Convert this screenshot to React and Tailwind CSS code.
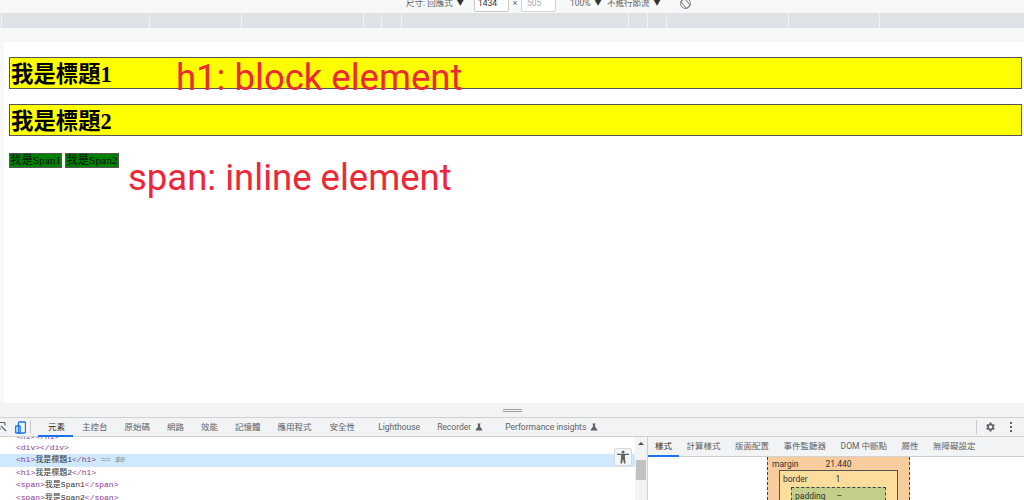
const sans = 'font-["Roboto","Noto_Sans_CJK_TC",sans-serif]';

function Flask() {
  return (
    <svg width="8" height="8" viewBox="0 0 8 8" className="shrink-0 text-[#5f6368]" fill="currentColor">
      <path d="M2.5 0.5h3v1h-.5v2l2.3 3.2v.8H.7v-.8L3 3.500v-2h-.5z" />
    </svg>
  );
}

function Caret() {
  return <span className="ml-[4px] text-[7px] text-[#333]">▼</span>;
}

const rulerSegments = [
  "w-[2px]", "w-[148px]", "w-[92px]", "w-[122px]", "w-[18px]", "w-[20px]",
  "w-[227px]", "w-[19px]", "w-[19px]", "w-[122px]", "w-[91px]", "flex-1",
];

function TopBar() {
  return (
    <div className={`${sans} h-[13px] shrink-0 overflow-hidden bg-[#f7f8f8] flex items-end pl-[406px] text-[8.500px] text-[#5f6368]`}>
      <div className="flex items-center h-[18px] mb-[1px]">
        <span className="w-[68px] flex items-center">尺寸: 回應式<Caret /></span>
        <span className="w-[35px] h-[18px] border border-[#c8c8c8] rounded-[2px] bg-white pl-[3px] leading-[16px] text-[#333]">1434</span>
        <span className="w-[12px] text-center">×</span>
        <span className="w-[35px] h-[18px] border border-[#d4d4d4] rounded-[2px] bg-white pl-[5px] leading-[16px] text-[#aaa]">505</span>
        <span className="ml-[14px] w-[37px] flex items-center">100%<Caret /></span>
        <span className="w-[73px] flex items-center">不進行節流<Caret /></span>
        <svg width="11" height="11" viewBox="0 0 11 11" fill="none" stroke="#80868b" strokeWidth="1">
          <rect x="3" y="1" width="5" height="9" rx="1" transform="rotate(-40 5.500 5.500)" />
          <circle cx="5.500" cy="5.500" r="5" />
        </svg>
      </div>
    </div>
  );
}

function Ruler() {
  return (
    <div className="h-[15px] shrink-0 border-t border-[#e0e1e3] flex bg-[#dee1e6]">
      {rulerSegments.map((w, i) => (
        <div key={i} className={`${w} border-r border-[#f2f3f5] last:border-r-0`} />
      ))}
    </div>
  );
}

function Page() {
  const h1 = 'h-[32px] ml-[1px] mr-[2px] border border-[#555] bg-[#ffff00] pl-[1px] text-[22.4px] font-bold leading-[33px] text-black font-["Liberation_Serif","Noto_Sans_CJK_TC",serif]';
  const span = 'inline-block h-[15px] border border-[#555] bg-[#008000] text-[11.4px] leading-[13px] text-[#111] font-["Liberation_Serif","Noto_Sans_CJK_TC",serif]';
  const note = 'absolute text-[#ee2737] font-["Roboto",sans-serif] font-normal leading-none whitespace-nowrap';
  return (
    <div className="h-[361px] shrink-0 ml-[4px] bg-white relative pt-[15px] pl-[4px]">
      <div className={h1}>我是標題1</div>
      <div className={`${h1} mt-[15px]`}>我是標題2</div>
      <div className="mt-[17px] ml-[1px] flex gap-[3px]">
        <span className={span}>我是Span1</span>
        <span className={span}>我是Span2</span>
      </div>
      <div className={`${note} left-[172px] top-[18px] text-[36.500px]`}>h1: block element</div>
      <div className={`${note} left-[124px] top-[118px] text-[36.500px]`}>span: inline element</div>
    </div>
  );
}

function DevToolbar() {
  const tabs = [
    ["元素", "ml-[17px] text-[#333]"], ["主控台", "ml-[17px]"], ["原始碼", "ml-[17px]"], ["網路", "ml-[17px]"],
    ["效能", "ml-[17px]"], ["記憶體", "ml-[17px]"], ["應用程式", "ml-[17px]"], ["安全性", "ml-[18px]"],
    ["Lighthouse", "ml-[23px]"],
  ];
  return (
    <div className={`${sans} h-[20px] shrink-0 border-y border-[#d0d1d3] bg-[#f1f3f4] flex items-center text-[8.500px] text-[#5f6368] relative`}>
      <svg width="7" height="12" viewBox="0 0 7 12" fill="none" stroke="#5f6368" strokeWidth="1.200" className="shrink-0">
        <path d="M-3 1.500h8M5 1.500v3M-1 8h2M1 5l5 5" />
      </svg>
      <svg width="11" height="13" viewBox="0 0 11 13" fill="none" stroke="#1a73e8" strokeWidth="1.300" className="ml-[8px] shrink-0">
        <rect x="3.500" y="1" width="7" height="11" rx="1" />
        <rect x="0.700" y="5" width="4.500" height="7" rx="0.500" />
      </svg>
      <div className="ml-[4px] w-px h-[14px] bg-[#c8c9cb]" />
      {tabs.map(([t, c]) => (
        <span key={t} className={`${c} whitespace-nowrap`}>{t}</span>
      ))}
      <span className="ml-[17px] whitespace-nowrap">Recorder</span>
      <span className="ml-[4px]"><Flask /></span>
      <span className="ml-[22px] whitespace-nowrap">Performance insights</span>
      <span className="ml-[4px]"><Flask /></span>
      <div className="absolute left-[38px] bottom-[-1px] w-[35px] h-[2px] bg-[#1a73e8]" />
      <div className="ml-auto w-px h-[14px] bg-[#c8c9cb]" />
      <svg width="12" height="12" viewBox="0 0 24 24" fill="#5f6368" className="ml-[7px] shrink-0">
        <path d="M19.400 13a7.500 7.500 0 0 0 0-2l2.100-1.600-2-3.500-2.500 1a7.500 7.500 0 0 0-1.700-1L15 3h-4l-.4 2.900a7.500 7.500 0 0 0-1.700 1l-2.500-1-2 3.500L6.500 11a7.500 7.500 0 0 0 0 2l-2.100 1.600 2 3.500 2.500-1a7.500 7.500 0 0 0 1.700 1L11 21h4l.4-2.900a7.500 7.500 0 0 0 1.700-1l2.500 1 2-3.500zM13 15.500a3.500 3.500 0 1 1 0-7 3.500 3.500 0 0 1 0 7z" />
      </svg>
      <div className="ml-[14px] mr-[12px] flex flex-col gap-[2px]">
        <i className="block w-[2px] h-[2px] bg-[#5f6368]" />
        <i className="block w-[2px] h-[2px] bg-[#5f6368]" />
        <i className="block w-[2px] h-[2px] bg-[#5f6368]" />
      </div>
    </div>
  );
}

function Tag({ name, children, suffix }) {
  const b = "text-[#8a3a90]";
  return (
    <>
      <span className={b}>&lt;{name}&gt;</span>
      {children && <span className="text-[#333]">{children}</span>}
      <span className={b}>&lt;/{name}&gt;</span>
      {suffix}
    </>
  );
}

function DomPanel() {
  const row = "h-[12.500px] leading-[12.500px] pl-[16px] whitespace-nowrap";
  return (
    <div className='w-[635px] shrink-0 overflow-hidden font-["Liberation_Mono","Noto_Sans_CJK_TC",monospace] text-[8px] relative'>
      <div className="-mt-[8px]">
        <div className="h-[12.500px] leading-[15px] pl-[16px] whitespace-nowrap"><Tag name="h1" /></div>
        <div className={row}><Tag name="div" /></div>
        <div className={`${row} bg-[#cfe8fc]`}>
          <Tag name="h1" suffix={<span className="italic text-[#80868b]"> == $0</span>}>我是標題1</Tag>
        </div>
        <div className={row}><Tag name="h1">我是標題2</Tag></div>
        <div className={row}><Tag name="span">我是Span1</Tag></div>
        <div className={row}><Tag name="span">我是Span2</Tag></div>
      </div>
      <div className="absolute left-[614px] top-[11px] w-[18px] h-[18px] rounded-[2px] border border-[#d8d9db] bg-[#f5f5f5] flex items-center justify-center">
        <svg width="14" height="14" viewBox="0 0 14 14" fill="#5f6368">
          <circle cx="7" cy="2" r="1.500" />
          <path d="M1 3.800h12v1.200H9v3l.6 5.500H8L7 9l-1 4.500H4.400L5 8V5H1z" />
        </svg>
      </div>
    </div>
  );
}

function Scrollbar() {
  return (
    <div className="w-[12px] shrink-0 bg-[#f3f3f3] flex flex-col items-center pt-[5px]">
      <div className="w-0 h-0 border-x-[3px] border-x-transparent border-b-[3px] border-b-[#505050]" />
      <div className="mt-[15px] w-[10px] h-[20px] bg-[#c1c1c1]" />
    </div>
  );
}

function SidePanel() {
  const tabs = [
    ["樣式", "ml-[7px] text-[#333]"], ["計算樣式", "ml-[14.500px]"], ["版面配置", "ml-[14.500px]"], ["事件監聽器", "ml-[14.500px]"],
    ["DOM 中斷點", "ml-[14.500px]"], ["屬性", "ml-[14.500px]"], ["無障礙設定", "ml-[14.500px]"],
  ];
  return (
    <div className={`${sans} flex-1 min-w-0 flex flex-col overflow-hidden border-l border-[#d0d1d3] text-[8.500px] text-[#5f6368]`}>
      <div className="h-[20px] shrink-0 bg-[#f1f3f4] border-b border-[#d0d1d3] flex items-center relative">
        {tabs.map(([t, c]) => <span key={t} className={`${c} whitespace-nowrap`}>{t}</span>)}
        <div className="absolute left-0 bottom-[-1px] w-[31px] h-[2px] bg-[#1a73e8]" />
      </div>
      <div className="ml-[119px] w-[143px] flex-1 bg-[#f9cc9d] border-x border-dashed border-[#444] px-[11px] text-[#333] overflow-hidden">
        <div className="h-[13px] leading-[15px] flex -mx-[7px]">
          <span>margin</span><span className="ml-[27px]">21.440</span>
        </div>
        <div className="h-[40px] bg-[#fddd9b] border border-[#555] px-[11px]">
          <div className="h-[16px] leading-[16px] flex -mx-[8px]">
            <span>border</span><span className="ml-[28px]">1</span>
          </div>
          <div className="h-[30px] bg-[#c3d08b] border border-dashed border-[#444] px-[3px] leading-[16px] flex">
            <span>padding</span><span className="ml-[11px]">–</span>
          </div>
        </div>
      </div>
    </div>
  );
}

export default function App() {
  return (
    <div className="w-[1024px] h-[500px] overflow-hidden flex flex-col bg-[#f7f8f8]">
      <TopBar />
      <Ruler />
      <div className="h-[14px] shrink-0" />
      <Page />
      <div className="h-[14px] shrink-0 bg-[#f1f3f4] flex flex-col items-center justify-center gap-px">
        <i className="block w-[19px] h-px bg-[#a0a2a4]" />
        <i className="block w-[19px] h-px bg-[#a0a2a4]" />
      </div>
      <DevToolbar />
      <div className="flex-1 min-h-0 flex bg-white">
        <DomPanel />
        <Scrollbar />
        <SidePanel />
      </div>
    </div>
  );
}
